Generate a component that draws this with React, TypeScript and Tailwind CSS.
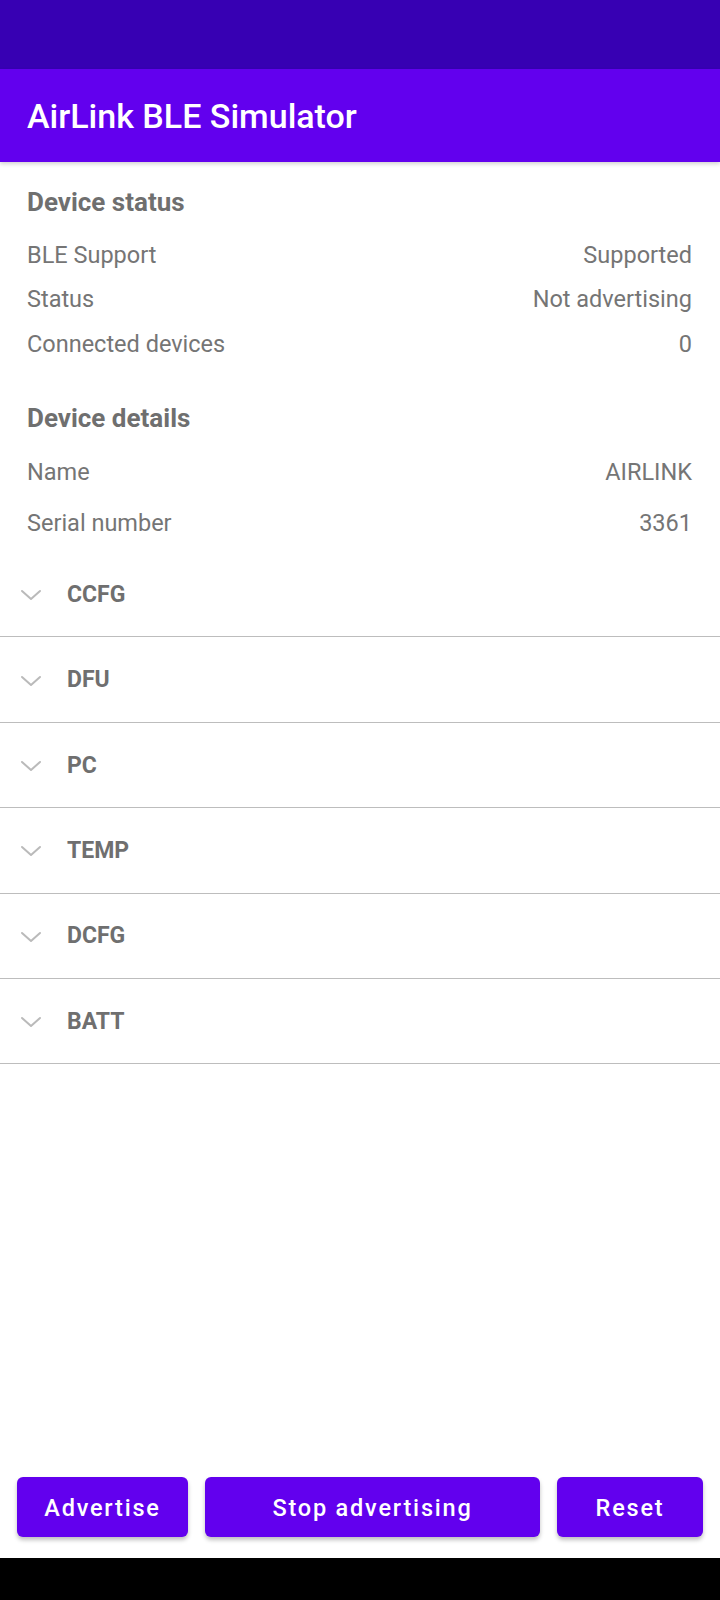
import React from 'react';

interface RowProps {
    label: string;
    value: string;
    height: string;
}

function InfoRow(props: RowProps) {
    return (
        <div className={`flex items-center justify-between pl-[27px] pr-[28px] text-[23.5px] text-[#757575] ${props.height}`}>
            <span>{props.label}</span>
            <span>{props.value}</span>
        </div>
    );
}

function Chevron() {
    return (
        <svg width="22" height="14" viewBox="0 0 22 14" fill="none" className="shrink-0">
            <polyline points="2,3 11,11 20,3" stroke="#bababa" strokeWidth="2" strokeLinecap="round" strokeLinejoin="round" />
        </svg>
    );
}

const services = ['CCFG', 'DFU', 'PC', 'TEMP', 'DCFG', 'BATT'];

function App() {
    return (
        <div className="flex flex-col h-[1600px] w-[720px] bg-white font-['Roboto',sans-serif]">
            <div className="h-[69px] bg-[#3700B3] shrink-0" />
            <header className="h-[93px] bg-[#6200EE] flex items-center pl-[27px] pt-[2px] shadow-[0_2px_4px_rgba(0,0,0,0.18)] shrink-0 relative z-10">
                <h1 className="text-white text-[34px] font-medium">AirLink BLE Simulator</h1>
            </header>
            <main className="flex-1 flex flex-col">
                <section className="pt-[20px]">
                    <h2 className="h-[40px] flex items-center pl-[27px] text-[26px] font-bold text-[#6f6f6f]">Device status</h2>
                    <div className="mt-[11px]">
                        <InfoRow label="BLE Support" value="Supported" height="h-[44.6px]" />
                        <InfoRow label="Status" value="Not advertising" height="h-[44.6px]" />
                        <InfoRow label="Connected devices" value="0" height="h-[44.6px]" />
                    </div>
                </section>
                <section className="mt-[32px]">
                    <h2 className="h-[40px] flex items-center pl-[27px] text-[26px] font-bold text-[#6f6f6f]">Device details</h2>
                    <div className="mt-[9px]">
                        <InfoRow label="Name" value="AIRLINK" height="h-[50.6px]" />
                        <InfoRow label="Serial number" value="3361" height="h-[50.6px]" />
                    </div>
                </section>
                <div className="mt-[3px] flex flex-col">
                    {services.map((service) => (
                        <div key={service} className="h-[85.4px] flex items-center border-b border-[#bdbdbd] pl-[20px] pt-[2px]">
                            <Chevron />
                            <span className="ml-[25px] text-[23px] font-bold text-[#6f6f6f]">{service}</span>
                        </div>
                    ))}
                </div>
            </main>
            <div className="flex gap-[17px] px-[17px] pb-[21px] shrink-0">
                <button className="w-[171px] h-[60px] pt-[3px] rounded-[6px] bg-[#6200EE] text-white text-[23.5px] font-medium tracking-[1.8px] shadow-[0_3px_4px_rgba(0,0,0,0.25)]">Advertise</button>
                <button className="flex-1 h-[60px] pt-[3px] rounded-[6px] bg-[#6200EE] text-white text-[23.5px] font-medium tracking-[1.8px] shadow-[0_3px_4px_rgba(0,0,0,0.25)]">Stop advertising</button>
                <button className="w-[146px] h-[60px] pt-[3px] rounded-[6px] bg-[#6200EE] text-white text-[23.5px] font-medium tracking-[1.8px] shadow-[0_3px_4px_rgba(0,0,0,0.25)]">Reset</button>
            </div>
            <div className="h-[42px] bg-black shrink-0" />
        </div>
    );
}

export default App;
